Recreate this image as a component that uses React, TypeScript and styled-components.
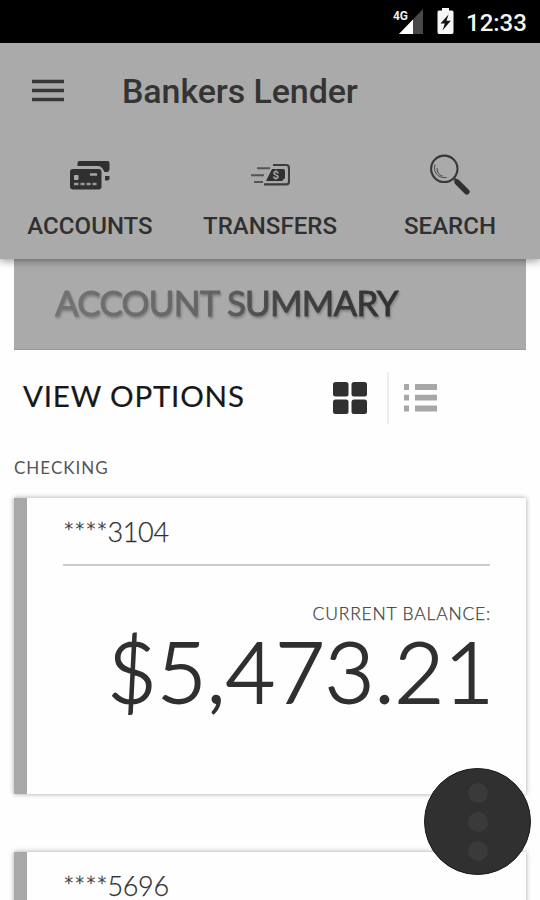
import React from 'react';
import styled, { createGlobalStyle } from 'styled-components';

const Global = createGlobalStyle`
  * { box-sizing: border-box; }
  html, body { margin: 0; background: #fefefe; }
  body { width: 540px; height: 900px; overflow: hidden; }
  svg { display: block; }
`;

const Screen = styled.div`
  width: 540px;
  height: 900px;
  overflow: hidden;
  display: flex;
  flex-direction: column;
  background: #fefefe;
  font-family: Lato, sans-serif;
  color: #2f2f2f;
  position: relative;
`;

const StatusBar = styled.div`
  flex: none;
  height: 43px;
  background: #000;
  display: flex;
  justify-content: flex-end;
  align-items: flex-start;
  padding: 7px 14px 0 0;
`;

const Clock = styled.span`
  font: 500 24px/32px Roboto, sans-serif;
  color: #f4f4f4;
  margin-left: 12px;
  width: 60px;
  white-space: nowrap;
`;

const Header = styled.header`
  flex: none;
  height: 216px;
  background: #aaa;
  box-shadow: 0 2px 8px rgba(0, 0, 0, 0.4);
  z-index: 1;
  font-family: Roboto, sans-serif;
`;

const TitleRow = styled.div`
  height: 96px;
  display: flex;
  align-items: center;
  padding-left: 32px;
`;

const Title = styled.h1`
  margin: 0 0 0 58px;
  font-size: 34px;
  line-height: 40px;
  font-weight: 480;
  letter-spacing: -0.1px;
  color: #343434;
`;

const Tabs = styled.nav`
  display: grid;
  grid-template-columns: repeat(3, 180px);
`;

const Tab = styled.div`
  display: flex;
  flex-direction: column;
  align-items: center;
`;

const TabIcon = styled.div`
  height: 72px;
  display: flex;
  align-items: center;
`;

const TabLabel = styled.span`
  font-size: 24px;
  line-height: 31px;
  font-weight: 470;
  letter-spacing: 0.05px;
  color: #303030;
`;

const Banner = styled.section`
  flex: none;
  height: 91px;
  margin: 0 14px;
  padding: 22px 0 0 41px;
  background: #aaa;
  border-bottom: 1px solid #999;
`;

const BannerTitle = styled.h2`
  margin: 0;
  width: max-content;
  padding-right: 2px;
  font-size: 35px;
  line-height: 42px;
  font-weight: 400;
  letter-spacing: -0.75px;
  -webkit-text-stroke: 0.9px transparent;
  color: transparent;
  background: linear-gradient(90deg, #737373, #626262 48%, #444 65%, #303030);
  background-clip: text;
  filter: drop-shadow(1px 2px 1px rgba(0, 0, 0, 0.25));
`;

const Options = styled.section`
  flex: none;
  height: 96px;
  display: flex;
  align-items: center;
  padding-left: 23px;
`;

const OptionsTitle = styled.h3`
  margin: 0 0 4px;
  width: 310px;
  font-size: 29.5px;
  line-height: 36px;
  font-weight: 400;
  -webkit-text-stroke: 0.2px #181818;
  letter-spacing: 0.8px;
  color: #181818;
`;

const Divider = styled.div`
  width: 2px;
  height: 52px;
  margin: 0 15px 0 20px;
  background: #eee;
`;

const Group = styled.h4`
  flex: none;
  margin: 11px 0 0 14px;
  height: 41px;
  font-size: 17px;
  line-height: 22px;
  font-weight: 400;
  letter-spacing: 1px;
  color: #555;
`;

const Card = styled.article`
  flex: none;
  height: 296px;
  margin: 0 14px 58px;
  border-left: 13px solid #a8a8a8;
  background: #fefefe;
  box-shadow: 0 0 5px rgba(0, 0, 0, 0.36);
  padding: 0 36px;
`;

const AccountNumber = styled.div`
  height: 68px;
  border-bottom: 2px solid #ccc;
  font-size: 27px;
  font-weight: 300;
  line-height: 68px;
  letter-spacing: -0.35px;
  -webkit-text-stroke: 0.25px #303030;
  color: #303030;
`;

const BalanceLabel = styled.div`
  margin: 37px -1px 0 0;
  font-size: 17.5px;
  font-weight: 300;
  line-height: 22px;
  letter-spacing: 0.8px;
  text-align: right;
  -webkit-text-stroke: 0.25px #404040;
  color: #404040;
`;

const Balance = styled.div`
  margin-right: -4px;
  font-size: 85.5px;
  font-weight: 300;
  line-height: 90px;
  letter-spacing: 0.1px;
  text-align: right;
  -webkit-text-stroke: 1.8px #303030;
  color: #303030;
`;

const MoreButton = styled.button`
  position: absolute;
  left: 424px;
  top: 768px;
  width: 107px;
  height: 107px;
  padding: 0;
  border: 1px solid #181818;
  border-radius: 50%;
  background: #303030;
  display: flex;
  flex-direction: column;
  align-items: center;
  justify-content: center;
  gap: 9px;
`;

const Dot = styled.span`
  width: 20px;
  height: 20px;
  border-radius: 50%;
  background: #3a3a3a;
`;

const SignalIcon = () => (
  <svg width="32" height="30" viewBox="0 0 32 30">
    <path d="M30 2V27H6z" fill="#484848" />
    <path d="M20 12.5V27H6z" fill="#fff" />
    <text x="0" y="13" fontFamily="Roboto" fontWeight="700" fontSize="13" textLength="15" lengthAdjust="spacingAndGlyphs" fill="#eee">4G</text>
  </svg>
);

const BatteryIcon = () => (
  <svg width="17" height="30" viewBox="0 0 17 30">
    <path d="M5 1h7v2.5h3q1.5 0 1.5 1.5v20q0 2-1.5 2H2q-1.5 0-1.5-2V5q0-1.5 1.5-1.5h3z" fill="#f5f5f5" />
    <path d="M11.5 7.5 3.5 16.5h4.3L5.5 23.5l8.3-9.7H9.5z" fill="#111" />
  </svg>
);

const StatusGap = styled.div`
  width: 12px;
`;

const MenuIcon = () => (
  <svg width="32" height="24" viewBox="0 0 32 24">
    <path d="M0 2.5h32M0 11.5h32M0 20.5h32" stroke="#383838" strokeWidth="3.4" />
  </svg>
);

const CardsIcon = () => (
  <svg width="42" height="30" viewBox="0 0 42 30">
    <path d="M8.5 6V3q0-2 2-2h28q2 0 2 2v7l-1.5 2h-3.5l-2-3.5q-1.5-2.5-4-2.5z" fill="#303030" />
    <path d="M36 16h4.5v2.5q0 2-2 2H36z" fill="#303030" />
    <rect x="1" y="9" width="31.5" height="20.5" rx="3" fill="#303030" />
    <rect x="5" y="15" width="4.5" height="5" rx=".8" fill="#aaa" />
    <path d="M21 14.5h7" stroke="#aaa" strokeWidth="2.4" />
    <path d="M5 24h4.5M11.5 24h4.2M17.6 24h4M23.5 24h4" stroke="#999" strokeWidth="2.4" />
  </svg>
);

const TransferIcon = () => (
  <svg width="40" height="24" viewBox="0 0 40 24">
    <path d="M23 2h13q3 0 3 3v13.4q0 3-3 3H14" fill="none" stroke="#3d3d3d" strokeWidth="2.1" />
    <path d="M7 5.3h13M1 12.2h13M4 19h9" stroke="#555" strokeWidth="2" />
    <path d="M22 6h11q2 0 2 2V15l-3 3H16z" fill="#303030" />
    <text x="22.5" y="16.2" fontFamily="Roboto" fontSize="11.5" fontWeight="700" fill="#aaa">$</text>
  </svg>
);

const SearchIcon = () => (
  <svg width="42" height="42" viewBox="0 0 42 42">
    <circle cx="15.3" cy="14.8" r="13.2" fill="none" stroke="#383838" strokeWidth="2.1" />
    <path d="M6 10.5C3.8 17.5 8.5 24.5 17.5 23.5M8 14q0 6.5 5.5 8" fill="none" stroke="#484848" strokeWidth="1" />
    <path d="m24.7 24.2 4 4" stroke="#444" strokeWidth="3.2" />
    <path d="m28.3 28.3 9.5 9.5" stroke="#303030" strokeWidth="5.6" strokeLinecap="round" />
  </svg>
);

const GridIcon = () => (
  <svg width="34" height="32" viewBox="0 0 34 32">
    <g fill="#303030">
      <rect width="15.5" height="14.5" rx="2.5" />
      <rect x="18.5" width="15.5" height="14.5" rx="2.5" />
      <rect y="17.5" width="15.5" height="14.5" rx="2.5" />
      <rect x="18.5" y="17.5" width="15.5" height="14.5" rx="2.5" />
    </g>
  </svg>
);

const ListIcon = () => (
  <svg width="34" height="30" viewBox="0 0 34 30">
    <path d="M0 4h5M0 14.7h5M0 25.5h5M11 4h22M11 14.7h22M11 25.5h22" stroke="#a7a7a7" strokeWidth="5.8" />
  </svg>
);

const tabs = [
  { label: 'ACCOUNTS', icon: <CardsIcon /> },
  { label: 'TRANSFERS', icon: <TransferIcon /> },
  { label: 'SEARCH', icon: <SearchIcon /> },
];

export default function App() {
  return (
    <>
      <Global />
      <Screen>
        <StatusBar>
          <SignalIcon />
          <StatusGap />
          <BatteryIcon />
          <Clock>12:33</Clock>
        </StatusBar>
        <Header>
          <TitleRow>
            <MenuIcon />
            <Title>Bankers Lender</Title>
          </TitleRow>
          <Tabs>
            {tabs.map(t => (
              <Tab key={t.label}>
                <TabIcon>{t.icon}</TabIcon>
                <TabLabel>{t.label}</TabLabel>
              </Tab>
            ))}
          </Tabs>
        </Header>
        <Banner>
          <BannerTitle>ACCOUNT SUMMARY</BannerTitle>
        </Banner>
        <Options>
          <OptionsTitle>VIEW OPTIONS</OptionsTitle>
          <GridIcon />
          <Divider />
          <ListIcon />
        </Options>
        <Group>CHECKING</Group>
        <Card>
          <AccountNumber>****3104</AccountNumber>
          <BalanceLabel>CURRENT BALANCE:</BalanceLabel>
          <Balance>$5,473.21</Balance>
        </Card>
        <Card>
          <AccountNumber>****5696</AccountNumber>
        </Card>
        <MoreButton aria-label="More">
          <Dot />
          <Dot />
          <Dot />
        </MoreButton>
      </Screen>
    </>
  );
}
